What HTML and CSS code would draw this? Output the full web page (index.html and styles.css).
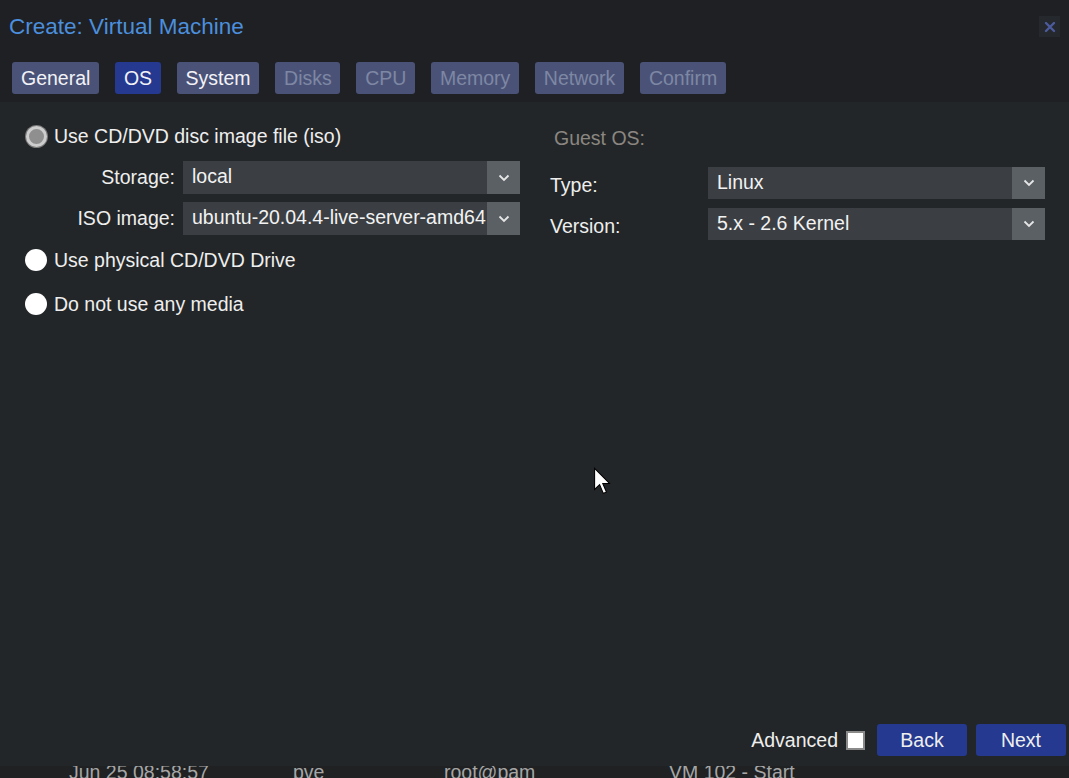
FILE: index.html
```html
<!DOCTYPE html>
<html>
<head>
<meta charset="utf-8">
<title>Create: Virtual Machine</title>
<link rel="stylesheet" href="styles.css">
</head>
<body>
<div class="window">
  <div class="header">
    <div class="title-row">
      <div class="title">Create: Virtual Machine</div>
      <div class="close">
        <svg width="12" height="12" viewBox="0 0 12 12"><path d="M2 2 L10 10 M10 2 L2 10" stroke="#4d5b9d" stroke-width="2.4" stroke-linecap="round"/></svg>
      </div>
    </div>
    <div class="tabs">
      <div class="tab">General</div>
      <div class="tab active">OS</div>
      <div class="tab">System</div>
      <div class="tab disabled">Disks</div>
      <div class="tab disabled">CPU</div>
      <div class="tab disabled">Memory</div>
      <div class="tab disabled">Network</div>
      <div class="tab disabled">Confirm</div>
    </div>
  </div>

  <div class="main">
    <div class="col left">
      <div class="radio-row first">
        <span class="radio checked"></span><span>Use CD/DVD disc image file (iso)</span>
      </div>
      <div class="field-row r-storage">
        <label class="flabel">Storage:</label>
        <div class="combo"><div class="combo-text">local</div><div class="trigger"><svg width="12" height="8" viewBox="0 0 12 8"><path d="M1.5 1.5 L6 6 L10.5 1.5" fill="none" stroke="#e6e6e6" stroke-width="1.8"/></svg></div></div>
      </div>
      <div class="field-row r-iso">
        <label class="flabel">ISO image:</label>
        <div class="combo"><div class="combo-text">ubuntu-20.04.4-live-server-amd64.iso</div><div class="trigger"><svg width="12" height="8" viewBox="0 0 12 8"><path d="M1.5 1.5 L6 6 L10.5 1.5" fill="none" stroke="#e6e6e6" stroke-width="1.8"/></svg></div></div>
      </div>
      <div class="radio-row r2">
        <span class="radio"></span><span>Use physical CD/DVD Drive</span>
      </div>
      <div class="radio-row r3">
        <span class="radio"></span><span>Do not use any media</span>
      </div>
    </div>

    <div class="col right">
      <div class="legend">Guest OS:</div>
      <div class="field-row r-type">
        <label class="flabel2">Type:</label>
        <div class="combo"><div class="combo-text">Linux</div><div class="trigger"><svg width="12" height="8" viewBox="0 0 12 8"><path d="M1.5 1.5 L6 6 L10.5 1.5" fill="none" stroke="#e6e6e6" stroke-width="1.8"/></svg></div></div>
      </div>
      <div class="field-row r-version">
        <label class="flabel2">Version:</label>
        <div class="combo"><div class="combo-text">5.x - 2.6 Kernel</div><div class="trigger"><svg width="12" height="8" viewBox="0 0 12 8"><path d="M1.5 1.5 L6 6 L10.5 1.5" fill="none" stroke="#e6e6e6" stroke-width="1.8"/></svg></div></div>
      </div>
    </div>
  </div>

  <div class="toolbar">
    <span class="adv-label">Advanced</span>
    <span class="checkbox"></span>
    <button class="btn back">Back</button>
    <button class="btn">Next</button>
  </div>

  <div class="log">
    <div class="log-row">
      <span class="c1">Jun 25 08:58:57</span>
      <span class="c2">pve</span>
      <span class="c3">root@pam</span>
      <span class="c4">VM 102 - Start</span>
    </div>
  </div>

  <svg class="cursor" width="19" height="29" viewBox="0 0 14 22"><path d="M1 1 L1 17 L4.8 13.4 L7.6 20 L10 19 L7.2 12.5 L12.3 12.5 Z" fill="#fff" stroke="#000" stroke-width="0.8"/></svg>
</div>
</body>
</html>
```

FILE: styles.css
```css
* { box-sizing: border-box; }
html, body { margin: 0; padding: 0; }
body {
  width: 1069px;
  height: 778px;
  overflow: hidden;
  background: #232628;
  font-family: "Liberation Sans", Arial, sans-serif;
  font-size: 19.5px;
  color: #eeeeee;
}
.window {
  position: relative;
  height: 778px;
  display: flex;
  flex-direction: column;
}
.header {
  background: #1f2023;
  height: 102px;
  padding: 0 9px 0 12px;
}
.title-row {
  height: 52px;
  display: flex;
  align-items: center;
  justify-content: space-between;
}
.title {
  color: #4b8fdd;
  font-size: 22.5px;
  margin-left: -3px;
  margin-top: 1px;
}
.close {
  width: 21px;
  height: 21px;
  background: #25282d;
  display: flex;
  align-items: center;
  justify-content: center;
  margin-top: 1px;
}
.tabs {
  margin-top: 10px;
  display: flex;
  gap: 16px;
}
.tab {
  height: 32px;
  padding: 0 8.5px 0 9px;
  display: flex;
  align-items: center;
  background: #4a5377;
  border-radius: 3px;
  color: #f2f2f7;
}
.tab.active { background: #24398f; }
.tab.disabled { color: #7e87a4; }

.main {
  flex: 1;
  display: flex;
  padding: 0 24px 0 25px;
  gap: 30px;
}
.col { width: 495px; display: flex; flex-direction: column; }
.radio-row {
  height: 30px;
  display: flex;
  align-items: center;
  gap: 7px;
}
.radio-row.first { margin-top: 19px; }
.radio-row.r2 { margin-top: 10px; }
.radio-row.r3 { margin-top: 14px; }
.radio {
  width: 22px;
  height: 22px;
  border-radius: 50%;
  background: #ffffff;
  flex: none;
}
.radio.checked {
  background: #8f8f8f;
  border: 3px solid #cdcdcd;
  box-shadow: 0 0 0 1px #7a7a7a;
  width: 21px;
  height: 21px;
  margin-left: 1px;
}
.field-row {
  display: flex;
  align-items: center;
  height: 33px;
}
.r-storage { margin-top: 10px; }
.r-iso { margin-top: 8px; }
.r-type { margin-top: 14px; height: 32px; }
.r-version { margin-top: 9px; height: 32px; }
.r-type .combo, .r-version .combo { height: 32px; }
.flabel {
  width: 150px;
  text-align: right;
  margin-right: 8px;
}
.flabel2 {
  width: 158px;
  margin-top: 4px;
}
.combo {
  width: 337px;
  height: 33px;
  display: flex;
  background: #3b3f43;
}
.combo-text {
  flex: 1;
  padding: 0 7px 0 9px;
  white-space: nowrap;
  overflow: hidden;
  line-height: 31px;
  color: #f2f2f2;
}
.trigger {
  width: 33px;
  flex: none;
  background: #5b6064;
  display: flex;
  align-items: center;
  justify-content: center;
}
.legend {
  margin-top: 21px;
  height: 30px;
  line-height: 30px;
  padding-left: 4px;
  color: #8b8681;
}

.toolbar {
  height: 50px;
  padding: 8px 3px 10px 0;
  display: flex;
  justify-content: flex-end;
  align-items: center;
}
.adv-label { margin-right: 8px; }
.checkbox {
  width: 19px;
  height: 19px;
  background: #ffffff;
  border: 2px solid #8a8a8a;
  margin-right: 12px;
}
.btn {
  width: 90px;
  height: 32px;
  border: none;
  border-radius: 3px;
  background: #24398f;
  color: #eeeeee;
  font-family: "Liberation Sans", Arial, sans-serif;
  font-size: 19.5px;
  padding: 0;
}
.btn.back { margin-right: 9px; }

.log {
  height: 12px;
  overflow: hidden;
  background: #1f2123;
}
.log-row {
  margin-top: -4px;
  display: flex;
  color: #a6a6a6;
  line-height: 20px;
}
.log-row span { display: block; }
.c1 { margin-left: 69px; width: 224px; }
.c2 { width: 151px; }
.c3 { width: 225px; }
.cursor {
  position: absolute;
  left: 593px;
  top: 467px;
}
```
